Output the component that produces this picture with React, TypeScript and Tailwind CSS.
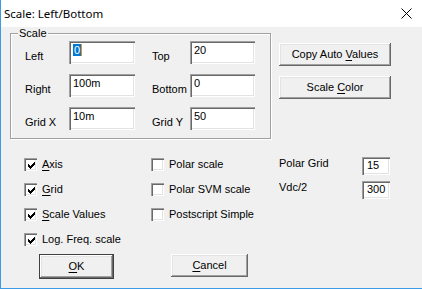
import React from 'react';

const ui = { fontFamily: '"Liberation Sans", Arial, sans-serif' };

function Field({ value, selected, w = 'w-[66px]' }: { value: string; selected?: boolean; w?: string }) {
  return (
    <div
      className={`${w} h-[23px] bg-white pl-[4px] pt-[3px] text-[11px] leading-[13px] text-black shadow-[inset_1px_1px_#a0a0a0,inset_2px_2px_#696969,inset_-1px_-1px_#ffffff,inset_-2px_-2px_#e3e3e3]`}
    >
      {selected ? (
        <span className="inline-block bg-[#0078d7] text-white px-[1px] leading-[12px] border-r border-[#ff8c00]">{value}</span>
      ) : (
        <span>{value}</span>
      )}
    </div>
  );
}

function SmallField({ value }: { value: string }) {
  return (
    <div className="w-[28px] h-[18px] bg-white pl-[5px] pt-[2px] text-[11px] leading-[13px] text-black shadow-[inset_1px_1px_#a0a0a0,inset_2px_2px_#696969,inset_-1px_-1px_#ffffff,inset_-2px_-2px_#e3e3e3]">
      {value}
    </div>
  );
}

function Button({ children, w, def }: { children: React.ReactNode; w: string; def?: boolean }) {
  return (
    <div
      className={`${w} flex items-center justify-center text-[11px] text-black bg-[#f0f0f0] ${
        def
          ? 'h-[25px] border border-[#404040] shadow-[inset_-1px_-1px_#696969,inset_1px_1px_#ffffff,inset_-2px_-2px_#a0a0a0,inset_2px_2px_#e3e3e3]'
          : 'h-[23px] shadow-[inset_-1px_-1px_#696969,inset_1px_1px_#ffffff,inset_-2px_-2px_#a0a0a0,inset_2px_2px_#e3e3e3]'
      }`}
    >
      <span className="whitespace-pre">{children}</span>
    </div>
  );
}

function Check({ checked, label }: { checked?: boolean; label: React.ReactNode }) {
  return (
    <div className="flex items-center h-[13px]">
      <div className="w-[13px] h-[13px] bg-white flex items-center justify-center shadow-[inset_1px_1px_#a0a0a0,inset_2px_2px_#696969,inset_-1px_-1px_#ffffff,inset_-2px_-2px_#e3e3e3]">
        {checked && (
          <svg width="7" height="7" viewBox="0 0 7 7" shapeRendering="crispEdges" className="ml-[1px] mt-[1px]">
            <path
              d="M6 0h1v1H6zM5 1h2v1H5zM0 2h1v1H0zM4 2h3v1H4zM0 3h2v1H0zM3 3h3v1H3zM0 4h5v1H0zM1 5h3v1H1zM2 6h1v1H2z"
              fill="#000"
            />
          </svg>
        )}
      </div>
      <span className="ml-[5px] text-[11px] leading-[13px] text-black whitespace-nowrap">{label}</span>
    </div>
  );
}

const U = ({ c }: { c: string }) => <span className="underline underline-offset-[2px]">{c}</span>;

export default function App() {
  return (
    <div className="w-[422px] h-[289px] flex flex-col bg-[#f0f0f0] border-l border-b border-[#3c9be8] overflow-hidden" style={ui}>
      {/* title bar */}
      <div className="h-[27px] bg-white flex items-center justify-between pl-[3px] pr-[10px]">
        <span className="text-[11.5px] text-black" style={{ fontFamily: '"Noto Sans", "Open Sans", sans-serif' }}>
          Scale: Left/Bottom
        </span>
        <svg width="11" height="11" viewBox="0 0 11 11" className="mb-[1px]">
          <path d="M0.5 0.5 L10.5 10.5 M10.5 0.5 L0.5 10.5" stroke="#000" strokeWidth="1" />
        </svg>
      </div>

      {/* top: group box + buttons */}
      <div className="flex mt-[6px] ml-[9px]">
        <div className="relative w-[261px] h-[106px] border border-[#a0a0a0] shadow-[inset_1px_1px_#ffffff,1px_1px_#ffffff]">
          <span className="absolute left-[7px] top-[-7px] bg-[#f0f0f0] px-[1px] text-[11px] leading-[13px] text-black">
            Scale
          </span>
          <div className="flex flex-col gap-[10px] pt-[7px] pl-[14px]">
            {[
              ['Left', '0', 'Top', '20'],
              ['Right', '100m', 'Bottom', '0'],
              ['Grid X', '10m', 'Grid Y', '50'],
            ].map(([l1, v1, l2, v2], i) => (
              <div key={l1} className="flex items-start">
                <span className="w-[44px] pt-[9px] text-[11px] leading-[13px] text-black">{l1}</span>
                <Field value={v1} selected={i === 0} />
                <span className="ml-[17px] w-[38px] pt-[9px] text-[11px] leading-[13px] text-black">{l2}</span>
                <Field value={v2} w="w-[65px]" />
              </div>
            ))}
          </div>
        </div>
        <div className="flex flex-col gap-[10px] ml-[8px] mt-[10px]">
          <Button w="w-[112px]">
            Copy Auto <U c="V" />alues
          </Button>
          <Button w="w-[112px]">
            Scale <U c="C" />olor
          </Button>
        </div>
      </div>

      {/* options */}
      <div className="flex mt-[19px]">
        <div className="ml-[23px] w-[127px] flex flex-col gap-[12px]">
          <Check checked label={<><U c="A" />xis</>} />
          <Check checked label={<><U c="G" />rid</>} />
          <Check checked label={<><U c="S" />cale Values</>} />
          <Check checked label="Log. Freq. scale" />
        </div>
        <div className="w-[128px] flex flex-col gap-[12px]">
          <Check label="Polar scale" />
          <Check label="Polar SVM scale" />
          <Check label="Postscript Simple" />
        </div>
        <div className="flex flex-col gap-[6px] -mt-[1px]">
          <div className="flex items-start">
            <span className="w-[83px] text-[11px] leading-[13px] text-black">Polar Grid</span>
            <SmallField value="15" />
          </div>
          <div className="flex items-start">
            <span className="w-[83px] text-[11px] leading-[13px] text-black">Vdc/2</span>
            <SmallField value="300" />
          </div>
        </div>
      </div>

      {/* bottom buttons */}
      <div className="flex mt-[8px] ml-[38px] gap-[57px]">
        <Button w="w-[75px]" def>
          <U c="O" />K
        </Button>
        <Button w="w-[77px]">
          <U c="C" />ancel
        </Button>
      </div>
    </div>
  );
}
